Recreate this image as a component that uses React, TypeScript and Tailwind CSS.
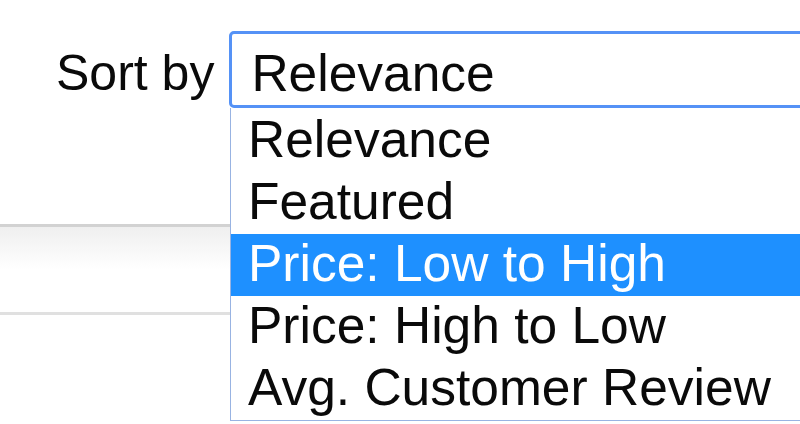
import React from "react";

const options = [
  "Relevance",
  "Featured",
  "Price: Low to High",
  "Price: High to Low",
  "Avg. Customer Review",
];

export default function App() {
  return (
    <div
      className="relative w-[800px] h-[424px] overflow-hidden bg-white text-[#0a0a0a] text-[51.5px]"
      style={{ fontFamily: '"Liberation Sans", Arial, sans-serif' }}
    >
      <div className="flex items-start pt-[31px]">
        <div className="ml-[56px] mr-[15px] pt-[11px] text-[50px] leading-[62px] whitespace-nowrap">
          Sort by
        </div>
        <div className="w-[620px] h-[77px] shrink-0 border-[3px] border-[#5592f6] rounded-[5px] pl-[19px] pt-[8px] leading-[62px] whitespace-nowrap">
          Relevance
        </div>
      </div>

      <div className="mt-[116px] h-[91px] border-t-[3px] border-b-[3px] border-t-[#d2d2d2] border-b-[#e0e0e0] bg-gradient-to-b from-[#efefef] via-white to-white" />

      <div className="absolute left-[230px] top-[108px] w-[620px] pt-[2px] bg-white border-l border-b border-[#98b3e2]">
        {options.map((o, i) => (
          <div
            key={o}
            className={
              "h-[62px] pl-[17px] leading-[58px] whitespace-nowrap " +
              (i === 2 ? "bg-[#1e90ff] text-white" : "")
            }
          >
            {o}
          </div>
        ))}
      </div>
    </div>
  );
}
